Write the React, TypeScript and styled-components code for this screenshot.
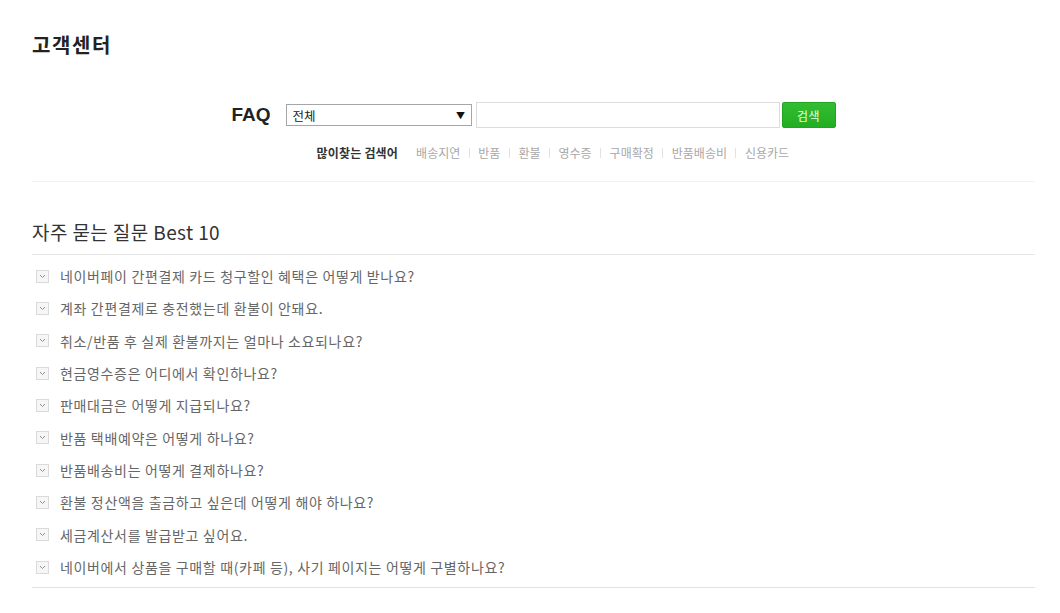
import styled, { createGlobalStyle } from "styled-components";

const GlobalStyle = createGlobalStyle`
  html, body {
    margin: 0;
    padding: 0;
    background: #fff;
  }
  body {
    font-family: "Noto Sans CJK KR", "Noto Sans", sans-serif;
    color: #333;
  }
`;

const keywords = ["배송지연", "반품", "환불", "영수증", "구매확정", "반품배송비", "신용카드"];

const questions = [
  "네이버페이 간편결제 카드 청구할인 혜택은 어떻게 받나요?",
  "계좌 간편결제로 충전했는데 환불이 안돼요.",
  "취소/반품 후 실제 환불까지는 얼마나 소요되나요?",
  "현금영수증은 어디에서 확인하나요?",
  "판매대금은 어떻게 지급되나요?",
  "반품 택배예약은 어떻게 하나요?",
  "반품배송비는 어떻게 결제하나요?",
  "환불 정산액을 출금하고 싶은데 어떻게 해야 하나요?",
  "세금계산서를 발급받고 싶어요.",
  "네이버에서 상품을 구매할 때(카페 등), 사기 페이지는 어떻게 구별하나요?",
];

const Page = styled.div`
  width: 1003px;
  padding: 0 32px;
  display: flex;
  flex-direction: column;
`;

const Title = styled.h1`
  margin: 34px 0 0;
  font-size: 20px;
  line-height: 22px;
  font-weight: 700;
  color: #222;
  letter-spacing: 1.6px;
`;

const SearchBox = styled.div`
  align-self: center;
  width: 604px;
  display: flex;
  flex-direction: column;
`;

const SearchRow = styled.div`
  margin-top: 46px;
  height: 26px;
  display: flex;
  align-items: center;
`;

const FaqLabel = styled.span`
  font-family: "Liberation Sans", Arial, sans-serif;
  font-size: 19px;
  font-weight: 700;
  color: #222;
  width: 55px;
`;

const FakeSelect = styled.div`
  box-sizing: border-box;
  width: 186px;
  height: 22px;
  border: 1px solid #a6a6a6;
  display: flex;
  align-items: center;
  justify-content: space-between;
  padding: 0 6px 0 5px;
  font-size: 12.5px;
  color: #222;
  background: #fff;
`;

const Arrow = styled.span`
  font-size: 9px;
  color: #111;
`;

const TextInput = styled.input`
  box-sizing: border-box;
  margin-left: 4px;
  width: 304px;
  height: 26px;
  border: 1px solid #dcdcdc;
  outline: none;
  padding: 0 6px;
`;

const SearchButton = styled.button`
  box-sizing: border-box;
  margin-left: 2px;
  width: 54px;
  height: 26px;
  border: 1px solid #21a521;
  border-radius: 2px;
  background: linear-gradient(#33bd33, #22ad22);
  color: #eaffea;
  font-family: "Noto Sans CJK KR", sans-serif;
  font-size: 12px;
  letter-spacing: 0.5px;
  padding: 0;
`;

const KeywordRow = styled.div`
  margin: 17px 0 0 85px;
  height: 16px;
  display: flex;
  align-items: center;
  font-size: 12px;
  line-height: 16px;
`;

const KeywordLabel = styled.span`
  font-weight: 700;
  color: #333;
  margin-right: 18px;
  letter-spacing: 0.2px;
`;

const Keyword = styled.span<{ $first?: boolean }>`
  color: #a8a8a8;
  letter-spacing: 0;
  display: flex;
  align-items: center;
  &::before {
    content: "";
    display: ${(p) => (p.$first ? "none" : "block")};
    width: 1px;
    height: 10px;
    background: #e2e2e2;
    margin: 0 8.5px;
  }
`;

const Divider = styled.div<{ $top: number; $color: string }>`
  margin-top: ${(p) => p.$top}px;
  height: 1px;
  background: ${(p) => p.$color};
`;

const SectionTitle = styled.h2`
  margin: 38px 0 0;
  font-size: 19px;
  line-height: 24px;
  font-weight: 400;
  color: #333;
  letter-spacing: 0.4px;
`;

const List = styled.ul`
  list-style: none;
  margin: 5px 0 4px;
  padding: 0;
`;

const Item = styled.li`
  height: 32.33px;
  display: flex;
  align-items: center;
  padding-left: 4px;
  font-size: 14px;
  color: #666;
  letter-spacing: 0.65px;
`;

const Check = styled.span`
  box-sizing: border-box;
  width: 13px;
  height: 13px;
  border: 1px solid #dadada;
  background: #f6f6f6;
  margin-right: 11px;
  display: flex;
  align-items: center;
  justify-content: center;
`;

const App = () => {
  return (
    <>
      <GlobalStyle />
      <Page>
        <Title>고객센터</Title>

        <SearchBox>
          <SearchRow>
            <FaqLabel>FAQ</FaqLabel>
            <FakeSelect>
              <span>전체</span>
              <Arrow>▼</Arrow>
            </FakeSelect>
            <TextInput type="text" />
            <SearchButton>검색</SearchButton>
          </SearchRow>
          <KeywordRow>
            <KeywordLabel>많이찾는 검색어</KeywordLabel>
            {keywords.map((k, i) => (
              <Keyword key={k} $first={i === 0}>
                {k}
              </Keyword>
            ))}
          </KeywordRow>
        </SearchBox>

        <Divider $top={20} $color="#f2f2f2" />

        <SectionTitle>자주 묻는 질문 Best 10</SectionTitle>
        <Divider $top={10} $color="#e6e6e6" />

        <List>
          {questions.map((q) => (
            <Item key={q}>
              <Check>
                <svg width="7" height="5" viewBox="0 0 7 5">
                  <path d="M1 1 L3.5 3.5 L6 1" fill="none" stroke="#8f8f8f" strokeWidth="1" />
                </svg>
              </Check>
              {q}
            </Item>
          ))}
        </List>

        <Divider $top={0} $color="#e2e2e2" />
      </Page>
    </>
  );
};

export default App;
